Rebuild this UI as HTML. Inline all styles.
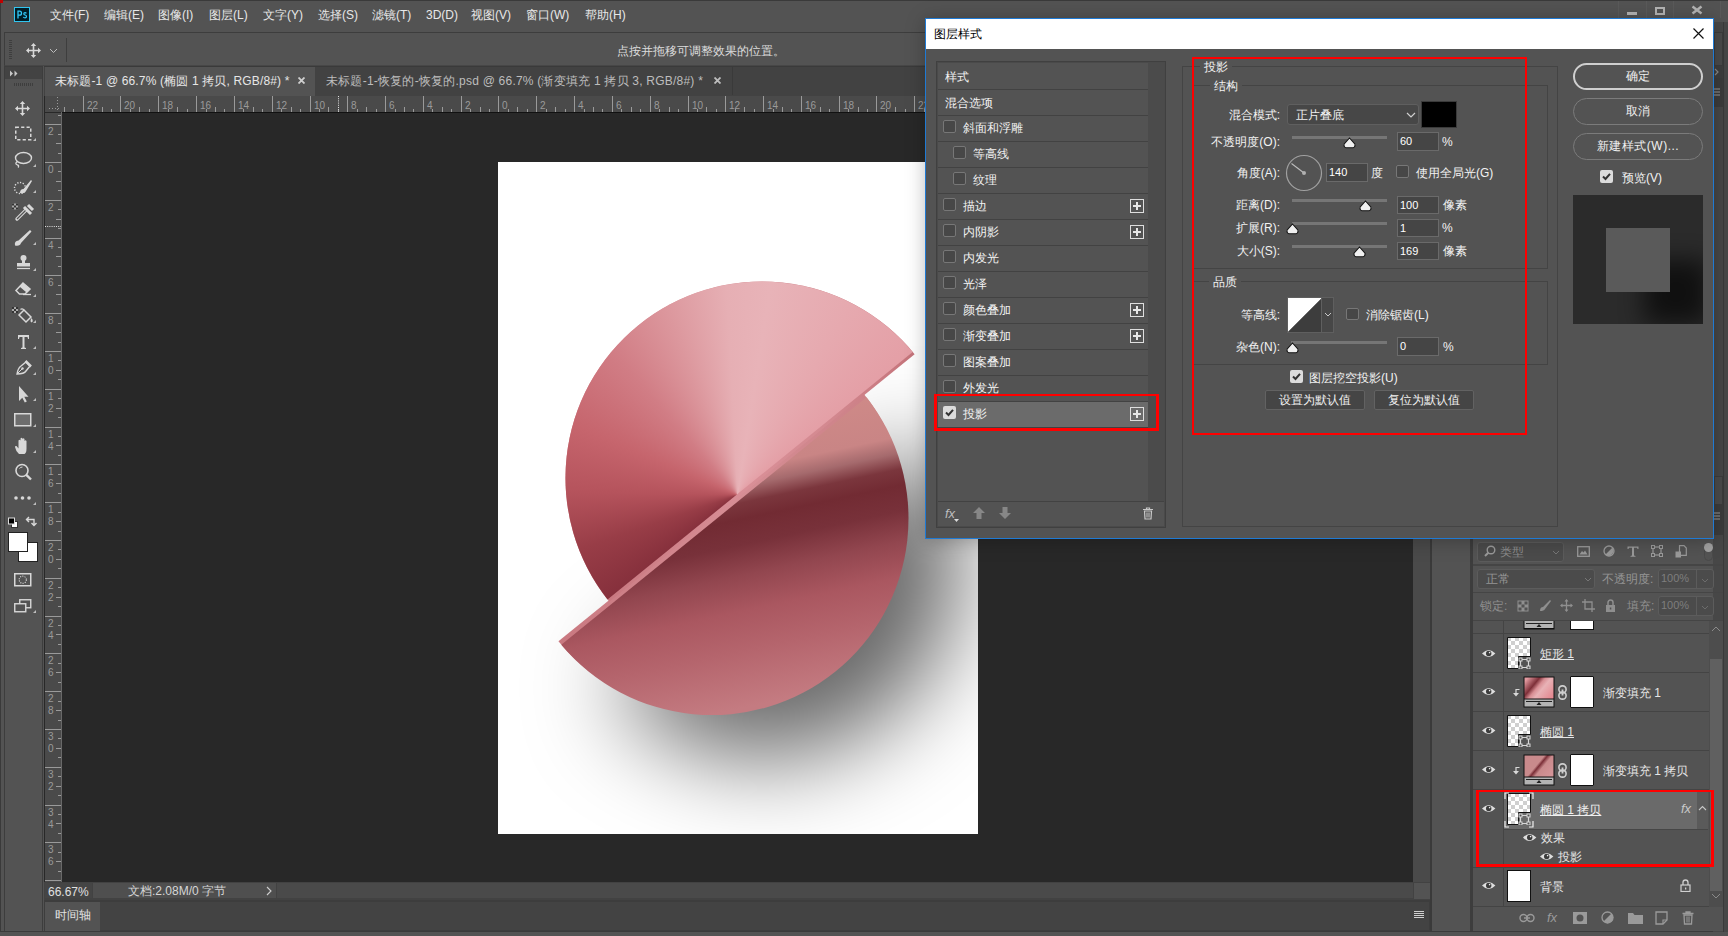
<!DOCTYPE html>
<html><head><meta charset="utf-8"><style>
html,body{margin:0;padding:0;width:1728px;height:936px;overflow:hidden;background:#535353}
body>div,body>svg{position:absolute}
.t{font-family:"Liberation Sans",sans-serif;white-space:nowrap}
</style></head><body>
<div style="left:0px;top:0px;width:1728px;height:936px;background:#535353"></div>
<div style="left:0px;top:0px;width:1728px;height:1px;background:#3a3a3a"></div>
<div style="left:0px;top:0px;width:1px;height:936px;background:#3a3a3a"></div>
<div style="left:14px;top:7px;width:16px;height:15px;background:#001d26;border:1px solid #31c5f0;box-sizing:border-box"></div>
<svg style="left:14px;top:7px;" width="16" height="15" viewBox="0 0 16 15"><path d="M4 11.5 V4.2 H5.6 Q7.5 4.2 7.5 6.2 Q7.5 8.2 5.6 8.2 H4" fill="none" stroke="#31c8f8" stroke-width="1.3"/><path d="M12.4 6.3 Q11.9 5.6 11 5.6 Q9.8 5.6 9.8 6.7 Q9.8 7.6 11.1 8 Q12.5 8.4 12.5 9.5 Q12.5 10.8 11 10.8 Q9.8 10.8 9.3 10" fill="none" stroke="#31c8f8" stroke-width="1.2"/></svg>
<div style="left:0px;top:0px;width:3px;height:3px;background:#c00000"></div>
<div class="t" style="left:50px;top:9px;font-size:12px;line-height:12px;color:#e8e8e8;">文件(F)</div>
<div class="t" style="left:104px;top:9px;font-size:12px;line-height:12px;color:#e8e8e8;">编辑(E)</div>
<div class="t" style="left:158px;top:9px;font-size:12px;line-height:12px;color:#e8e8e8;">图像(I)</div>
<div class="t" style="left:209px;top:9px;font-size:12px;line-height:12px;color:#e8e8e8;">图层(L)</div>
<div class="t" style="left:263px;top:9px;font-size:12px;line-height:12px;color:#e8e8e8;">文字(Y)</div>
<div class="t" style="left:318px;top:9px;font-size:12px;line-height:12px;color:#e8e8e8;">选择(S)</div>
<div class="t" style="left:372px;top:9px;font-size:12px;line-height:12px;color:#e8e8e8;">滤镜(T)</div>
<div class="t" style="left:426px;top:9px;font-size:12px;line-height:12px;color:#e8e8e8;">3D(D)</div>
<div class="t" style="left:471px;top:9px;font-size:12px;line-height:12px;color:#e8e8e8;">视图(V)</div>
<div class="t" style="left:526px;top:9px;font-size:12px;line-height:12px;color:#e8e8e8;">窗口(W)</div>
<div class="t" style="left:585px;top:9px;font-size:12px;line-height:12px;color:#e8e8e8;">帮助(H)</div>
<div style="left:1618px;top:1px;width:1px;height:17px;background:#5a5a5a"></div>
<div style="left:1646px;top:1px;width:1px;height:17px;background:#5a5a5a"></div>
<div style="left:1673px;top:1px;width:1px;height:17px;background:#5a5a5a"></div>
<div style="left:1720px;top:1px;width:1px;height:17px;background:#5a5a5a"></div>
<div style="left:1627px;top:12px;width:10px;height:3px;background:#b4b4b4"></div>
<div style="left:1655px;top:7px;width:10px;height:8px;border:2px solid #b4b4b4;box-sizing:border-box"></div>
<svg style="left:1691px;top:5px;" width="12" height="10" viewBox="0 0 12 10"><path d="M1.5 1.5 L10.5 8.5 M10.5 1.5 L1.5 8.5" stroke="#b4b4b4" stroke-width="2.4"/></svg>
<div style="left:4px;top:32px;width:1724px;height:34px;background:#535353;border-top:1px solid #3d3d3d;border-left:1px solid #3d3d3d;border-bottom:1px solid #474747;box-sizing:border-box"></div>
<div style="left:9px;top:40px;width:3px;height:1px;background:#3e3e3e"></div>
<div style="left:9px;top:42px;width:3px;height:1px;background:#3e3e3e"></div>
<div style="left:9px;top:44px;width:3px;height:1px;background:#3e3e3e"></div>
<div style="left:9px;top:46px;width:3px;height:1px;background:#3e3e3e"></div>
<div style="left:9px;top:48px;width:3px;height:1px;background:#3e3e3e"></div>
<div style="left:9px;top:50px;width:3px;height:1px;background:#3e3e3e"></div>
<div style="left:9px;top:52px;width:3px;height:1px;background:#3e3e3e"></div>
<div style="left:9px;top:54px;width:3px;height:1px;background:#3e3e3e"></div>
<div style="left:9px;top:56px;width:3px;height:1px;background:#3e3e3e"></div>
<div style="left:9px;top:58px;width:3px;height:1px;background:#3e3e3e"></div>
<svg style="left:24px;top:40px;" width="20" height="20" viewBox="0 0 20 20"><path d="M9.5 5 V16 M4 10.5 H15" stroke="#d8d8d8" stroke-width="1.6"/><path d="M9.5 3 L6.8 6 H12.2Z M9.5 18 L6.8 15 H12.2Z M2 10.5 L5 7.8 V13.2Z M17 10.5 L14 7.8 V13.2Z" fill="#d8d8d8"/></svg>
<svg style="left:49px;top:48px;" width="9" height="6" viewBox="0 0 9 6"><path d="M1 1 L4.5 4.5 L8 1" stroke="#bdbdbd" fill="none" stroke-width="1"/></svg>
<div style="left:66px;top:38px;width:1px;height:24px;background:#3e3e3e"></div>
<div class="t" style="left:617px;top:45px;font-size:12px;line-height:12px;color:#dcdcdc;">点按并拖移可调整效果的位置。</div>
<div style="left:44px;top:66px;width:1684px;height:30px;background:#424242"></div>
<div style="left:44px;top:66px;width:1684px;height:1px;background:#3a3a3a"></div>
<div style="left:45px;top:67px;width:270px;height:29px;background:#535353"></div>
<div class="t" style="left:55px;top:75px;font-size:12px;line-height:12px;color:#e6e6e6;letter-spacing:0.15px">未标题-1 @ 66.7% (椭圆 1 拷贝, RGB/8#) *</div>
<svg style="left:298px;top:77px;" width="7" height="7" viewBox="0 0 7 7"><path d="M0.5 0.5 L6.5 6.5 M6.5 0.5 L0.5 6.5" stroke="#cfcfcf" stroke-width="1.8"/></svg>
<div style="left:316px;top:67px;width:416px;height:28px;background:#424242"></div>
<div style="left:732px;top:67px;width:1px;height:28px;background:#3a3a3a"></div>
<div class="t" style="left:326px;top:75px;font-size:12px;line-height:12px;color:#bdbdbd;letter-spacing:0.22px">未标题-1-恢复的-恢复的.psd @ 66.7% (渐变填充 1 拷贝 3, RGB/8#) *</div>
<svg style="left:714px;top:77px;" width="7" height="7" viewBox="0 0 7 7"><path d="M0.5 0.5 L6.5 6.5 M6.5 0.5 L0.5 6.5" stroke="#bdbdbd" stroke-width="1.8"/></svg>
<div style="left:4px;top:66px;width:39px;height:866px;background:#535353;border:1px solid #3d3d3d;box-sizing:border-box"></div>
<div style="left:5px;top:67px;width:37px;height:12px;background:#434343"></div>
<svg style="left:9px;top:70px;" width="10" height="7" viewBox="0 0 10 7"><path d="M1 0.5 L4 3.5 L1 6.5Z M5.5 0.5 L8.5 3.5 L5.5 6.5Z" fill="#c8c8c8"/></svg>
<div style="left:14px;top:83px;width:1px;height:3px;background:#3e3e3e"></div>
<div style="left:16px;top:83px;width:1px;height:3px;background:#3e3e3e"></div>
<div style="left:18px;top:83px;width:1px;height:3px;background:#3e3e3e"></div>
<div style="left:20px;top:83px;width:1px;height:3px;background:#3e3e3e"></div>
<div style="left:22px;top:83px;width:1px;height:3px;background:#3e3e3e"></div>
<div style="left:24px;top:83px;width:1px;height:3px;background:#3e3e3e"></div>
<div style="left:26px;top:83px;width:1px;height:3px;background:#3e3e3e"></div>
<div style="left:28px;top:83px;width:1px;height:3px;background:#3e3e3e"></div>
<div style="left:30px;top:83px;width:1px;height:3px;background:#3e3e3e"></div>
<div style="left:32px;top:83px;width:1px;height:3px;background:#3e3e3e"></div>
<div style="left:44px;top:96px;width:1386px;height:786px;background:#282828"></div>
<div style="left:45px;top:96px;width:1368px;height:16px;background:#4a4a4a"></div>
<svg style="left:62px;top:96px;" width="1351" height="16" viewBox="0 0 1351 16"><path d="M2.5 11 V16" stroke="#9a9a9a" stroke-width="1"/><path d="M11.5 13 V16" stroke="#9a9a9a" stroke-width="1"/><path d="M21.5 0 V16" stroke="#9a9a9a" stroke-width="1"/><path d="M30.5 13 V16" stroke="#9a9a9a" stroke-width="1"/><path d="M40.5 11 V16" stroke="#9a9a9a" stroke-width="1"/><path d="M49.5 13 V16" stroke="#9a9a9a" stroke-width="1"/><text x="25" y="13" font-size="10" fill="#9a9a9a" font-family="Liberation Sans">22</text><path d="M58.5 0 V16" stroke="#9a9a9a" stroke-width="1"/><path d="M68.5 13 V16" stroke="#9a9a9a" stroke-width="1"/><path d="M77.5 11 V16" stroke="#9a9a9a" stroke-width="1"/><path d="M87.5 13 V16" stroke="#9a9a9a" stroke-width="1"/><text x="62" y="13" font-size="10" fill="#9a9a9a" font-family="Liberation Sans">20</text><path d="M96.5 0 V16" stroke="#9a9a9a" stroke-width="1"/><path d="M106.5 13 V16" stroke="#9a9a9a" stroke-width="1"/><path d="M115.5 11 V16" stroke="#9a9a9a" stroke-width="1"/><path d="M125.5 13 V16" stroke="#9a9a9a" stroke-width="1"/><text x="100" y="13" font-size="10" fill="#9a9a9a" font-family="Liberation Sans">18</text><path d="M134.5 0 V16" stroke="#9a9a9a" stroke-width="1"/><path d="M144.5 13 V16" stroke="#9a9a9a" stroke-width="1"/><path d="M153.5 11 V16" stroke="#9a9a9a" stroke-width="1"/><path d="M162.5 13 V16" stroke="#9a9a9a" stroke-width="1"/><text x="138" y="13" font-size="10" fill="#9a9a9a" font-family="Liberation Sans">16</text><path d="M172.5 0 V16" stroke="#9a9a9a" stroke-width="1"/><path d="M181.5 13 V16" stroke="#9a9a9a" stroke-width="1"/><path d="M191.5 11 V16" stroke="#9a9a9a" stroke-width="1"/><path d="M200.5 13 V16" stroke="#9a9a9a" stroke-width="1"/><text x="176" y="13" font-size="10" fill="#9a9a9a" font-family="Liberation Sans">14</text><path d="M210.5 0 V16" stroke="#9a9a9a" stroke-width="1"/><path d="M219.5 13 V16" stroke="#9a9a9a" stroke-width="1"/><path d="M229.5 11 V16" stroke="#9a9a9a" stroke-width="1"/><path d="M238.5 13 V16" stroke="#9a9a9a" stroke-width="1"/><text x="214" y="13" font-size="10" fill="#9a9a9a" font-family="Liberation Sans">12</text><path d="M248.5 0 V16" stroke="#9a9a9a" stroke-width="1"/><path d="M257.5 13 V16" stroke="#9a9a9a" stroke-width="1"/><path d="M266.5 11 V16" stroke="#9a9a9a" stroke-width="1"/><path d="M276.5 13 V16" stroke="#9a9a9a" stroke-width="1"/><text x="252" y="13" font-size="10" fill="#9a9a9a" font-family="Liberation Sans">10</text><path d="M285.5 0 V16" stroke="#9a9a9a" stroke-width="1"/><path d="M295.5 13 V16" stroke="#9a9a9a" stroke-width="1"/><path d="M304.5 11 V16" stroke="#9a9a9a" stroke-width="1"/><path d="M314.5 13 V16" stroke="#9a9a9a" stroke-width="1"/><text x="289" y="13" font-size="10" fill="#9a9a9a" font-family="Liberation Sans">8</text><path d="M323.5 0 V16" stroke="#9a9a9a" stroke-width="1"/><path d="M333.5 13 V16" stroke="#9a9a9a" stroke-width="1"/><path d="M342.5 11 V16" stroke="#9a9a9a" stroke-width="1"/><path d="M351.5 13 V16" stroke="#9a9a9a" stroke-width="1"/><text x="327" y="13" font-size="10" fill="#9a9a9a" font-family="Liberation Sans">6</text><path d="M361.5 0 V16" stroke="#9a9a9a" stroke-width="1"/><path d="M370.5 13 V16" stroke="#9a9a9a" stroke-width="1"/><path d="M380.5 11 V16" stroke="#9a9a9a" stroke-width="1"/><path d="M389.5 13 V16" stroke="#9a9a9a" stroke-width="1"/><text x="365" y="13" font-size="10" fill="#9a9a9a" font-family="Liberation Sans">4</text><path d="M399.5 0 V16" stroke="#9a9a9a" stroke-width="1"/><path d="M408.5 13 V16" stroke="#9a9a9a" stroke-width="1"/><path d="M418.5 11 V16" stroke="#9a9a9a" stroke-width="1"/><path d="M427.5 13 V16" stroke="#9a9a9a" stroke-width="1"/><text x="403" y="13" font-size="10" fill="#9a9a9a" font-family="Liberation Sans">2</text><path d="M436.5 0 V16" stroke="#9a9a9a" stroke-width="1"/><path d="M446.5 13 V16" stroke="#9a9a9a" stroke-width="1"/><path d="M455.5 11 V16" stroke="#9a9a9a" stroke-width="1"/><path d="M465.5 13 V16" stroke="#9a9a9a" stroke-width="1"/><text x="440" y="13" font-size="10" fill="#9a9a9a" font-family="Liberation Sans">0</text><path d="M474.5 0 V16" stroke="#9a9a9a" stroke-width="1"/><path d="M484.5 13 V16" stroke="#9a9a9a" stroke-width="1"/><path d="M493.5 11 V16" stroke="#9a9a9a" stroke-width="1"/><path d="M503.5 13 V16" stroke="#9a9a9a" stroke-width="1"/><text x="478" y="13" font-size="10" fill="#9a9a9a" font-family="Liberation Sans">2</text><path d="M512.5 0 V16" stroke="#9a9a9a" stroke-width="1"/><path d="M522.5 13 V16" stroke="#9a9a9a" stroke-width="1"/><path d="M531.5 11 V16" stroke="#9a9a9a" stroke-width="1"/><path d="M540.5 13 V16" stroke="#9a9a9a" stroke-width="1"/><text x="516" y="13" font-size="10" fill="#9a9a9a" font-family="Liberation Sans">4</text><path d="M550.5 0 V16" stroke="#9a9a9a" stroke-width="1"/><path d="M559.5 13 V16" stroke="#9a9a9a" stroke-width="1"/><path d="M569.5 11 V16" stroke="#9a9a9a" stroke-width="1"/><path d="M578.5 13 V16" stroke="#9a9a9a" stroke-width="1"/><text x="554" y="13" font-size="10" fill="#9a9a9a" font-family="Liberation Sans">6</text><path d="M588.5 0 V16" stroke="#9a9a9a" stroke-width="1"/><path d="M597.5 13 V16" stroke="#9a9a9a" stroke-width="1"/><path d="M607.5 11 V16" stroke="#9a9a9a" stroke-width="1"/><path d="M616.5 13 V16" stroke="#9a9a9a" stroke-width="1"/><text x="592" y="13" font-size="10" fill="#9a9a9a" font-family="Liberation Sans">8</text><path d="M626.5 0 V16" stroke="#9a9a9a" stroke-width="1"/><path d="M635.5 13 V16" stroke="#9a9a9a" stroke-width="1"/><path d="M644.5 11 V16" stroke="#9a9a9a" stroke-width="1"/><path d="M654.5 13 V16" stroke="#9a9a9a" stroke-width="1"/><text x="630" y="13" font-size="10" fill="#9a9a9a" font-family="Liberation Sans">10</text><path d="M663.5 0 V16" stroke="#9a9a9a" stroke-width="1"/><path d="M673.5 13 V16" stroke="#9a9a9a" stroke-width="1"/><path d="M682.5 11 V16" stroke="#9a9a9a" stroke-width="1"/><path d="M692.5 13 V16" stroke="#9a9a9a" stroke-width="1"/><text x="667" y="13" font-size="10" fill="#9a9a9a" font-family="Liberation Sans">12</text><path d="M701.5 0 V16" stroke="#9a9a9a" stroke-width="1"/><path d="M711.5 13 V16" stroke="#9a9a9a" stroke-width="1"/><path d="M720.5 11 V16" stroke="#9a9a9a" stroke-width="1"/><path d="M729.5 13 V16" stroke="#9a9a9a" stroke-width="1"/><text x="705" y="13" font-size="10" fill="#9a9a9a" font-family="Liberation Sans">14</text><path d="M739.5 0 V16" stroke="#9a9a9a" stroke-width="1"/><path d="M748.5 13 V16" stroke="#9a9a9a" stroke-width="1"/><path d="M758.5 11 V16" stroke="#9a9a9a" stroke-width="1"/><path d="M767.5 13 V16" stroke="#9a9a9a" stroke-width="1"/><text x="743" y="13" font-size="10" fill="#9a9a9a" font-family="Liberation Sans">16</text><path d="M777.5 0 V16" stroke="#9a9a9a" stroke-width="1"/><path d="M786.5 13 V16" stroke="#9a9a9a" stroke-width="1"/><path d="M796.5 11 V16" stroke="#9a9a9a" stroke-width="1"/><path d="M805.5 13 V16" stroke="#9a9a9a" stroke-width="1"/><text x="781" y="13" font-size="10" fill="#9a9a9a" font-family="Liberation Sans">18</text><path d="M814.5 0 V16" stroke="#9a9a9a" stroke-width="1"/><path d="M824.5 13 V16" stroke="#9a9a9a" stroke-width="1"/><path d="M833.5 11 V16" stroke="#9a9a9a" stroke-width="1"/><path d="M843.5 13 V16" stroke="#9a9a9a" stroke-width="1"/><text x="818" y="13" font-size="10" fill="#9a9a9a" font-family="Liberation Sans">20</text><path d="M852.5 0 V16" stroke="#9a9a9a" stroke-width="1"/><path d="M862.5 13 V16" stroke="#9a9a9a" stroke-width="1"/><path d="M871.5 11 V16" stroke="#9a9a9a" stroke-width="1"/><path d="M881.5 13 V16" stroke="#9a9a9a" stroke-width="1"/><text x="856" y="13" font-size="10" fill="#9a9a9a" font-family="Liberation Sans">22</text><path d="M890.5 0 V16" stroke="#9a9a9a" stroke-width="1"/><path d="M900.5 13 V16" stroke="#9a9a9a" stroke-width="1"/><path d="M909.5 11 V16" stroke="#9a9a9a" stroke-width="1"/><path d="M918.5 13 V16" stroke="#9a9a9a" stroke-width="1"/><text x="894" y="13" font-size="10" fill="#9a9a9a" font-family="Liberation Sans">24</text><path d="M928.5 0 V16" stroke="#9a9a9a" stroke-width="1"/><path d="M937.5 13 V16" stroke="#9a9a9a" stroke-width="1"/><path d="M947.5 11 V16" stroke="#9a9a9a" stroke-width="1"/><path d="M956.5 13 V16" stroke="#9a9a9a" stroke-width="1"/><text x="932" y="13" font-size="10" fill="#9a9a9a" font-family="Liberation Sans">26</text><path d="M966.5 0 V16" stroke="#9a9a9a" stroke-width="1"/><path d="M975.5 13 V16" stroke="#9a9a9a" stroke-width="1"/><path d="M985.5 11 V16" stroke="#9a9a9a" stroke-width="1"/><path d="M994.5 13 V16" stroke="#9a9a9a" stroke-width="1"/><text x="970" y="13" font-size="10" fill="#9a9a9a" font-family="Liberation Sans">28</text><path d="M1004.5 0 V16" stroke="#9a9a9a" stroke-width="1"/><path d="M1013.5 13 V16" stroke="#9a9a9a" stroke-width="1"/><path d="M1022.5 11 V16" stroke="#9a9a9a" stroke-width="1"/><path d="M1032.5 13 V16" stroke="#9a9a9a" stroke-width="1"/><text x="1008" y="13" font-size="10" fill="#9a9a9a" font-family="Liberation Sans">30</text><path d="M1041.5 0 V16" stroke="#9a9a9a" stroke-width="1"/><path d="M1051.5 13 V16" stroke="#9a9a9a" stroke-width="1"/><path d="M1060.5 11 V16" stroke="#9a9a9a" stroke-width="1"/><path d="M1070.5 13 V16" stroke="#9a9a9a" stroke-width="1"/><text x="1045" y="13" font-size="10" fill="#9a9a9a" font-family="Liberation Sans">32</text><path d="M1079.5 0 V16" stroke="#9a9a9a" stroke-width="1"/><path d="M1089.5 13 V16" stroke="#9a9a9a" stroke-width="1"/><path d="M1098.5 11 V16" stroke="#9a9a9a" stroke-width="1"/><path d="M1107.5 13 V16" stroke="#9a9a9a" stroke-width="1"/><text x="1083" y="13" font-size="10" fill="#9a9a9a" font-family="Liberation Sans">34</text><path d="M1117.5 0 V16" stroke="#9a9a9a" stroke-width="1"/><path d="M1126.5 13 V16" stroke="#9a9a9a" stroke-width="1"/><path d="M1136.5 11 V16" stroke="#9a9a9a" stroke-width="1"/><path d="M1145.5 13 V16" stroke="#9a9a9a" stroke-width="1"/><text x="1121" y="13" font-size="10" fill="#9a9a9a" font-family="Liberation Sans">36</text><path d="M1155.5 0 V16" stroke="#9a9a9a" stroke-width="1"/><path d="M1164.5 13 V16" stroke="#9a9a9a" stroke-width="1"/><path d="M1174.5 11 V16" stroke="#9a9a9a" stroke-width="1"/><path d="M1183.5 13 V16" stroke="#9a9a9a" stroke-width="1"/><text x="1159" y="13" font-size="10" fill="#9a9a9a" font-family="Liberation Sans">38</text><path d="M1192.5 0 V16" stroke="#9a9a9a" stroke-width="1"/><path d="M1202.5 13 V16" stroke="#9a9a9a" stroke-width="1"/><path d="M1211.5 11 V16" stroke="#9a9a9a" stroke-width="1"/><path d="M1221.5 13 V16" stroke="#9a9a9a" stroke-width="1"/><text x="1196" y="13" font-size="10" fill="#9a9a9a" font-family="Liberation Sans">40</text><path d="M1230.5 0 V16" stroke="#9a9a9a" stroke-width="1"/><path d="M1240.5 13 V16" stroke="#9a9a9a" stroke-width="1"/><path d="M1249.5 11 V16" stroke="#9a9a9a" stroke-width="1"/><path d="M1259.5 13 V16" stroke="#9a9a9a" stroke-width="1"/><text x="1234" y="13" font-size="10" fill="#9a9a9a" font-family="Liberation Sans">42</text><path d="M1268.5 0 V16" stroke="#9a9a9a" stroke-width="1"/><path d="M1278.5 13 V16" stroke="#9a9a9a" stroke-width="1"/><path d="M1287.5 11 V16" stroke="#9a9a9a" stroke-width="1"/><path d="M1296.5 13 V16" stroke="#9a9a9a" stroke-width="1"/><text x="1272" y="13" font-size="10" fill="#9a9a9a" font-family="Liberation Sans">44</text><path d="M1306.5 0 V16" stroke="#9a9a9a" stroke-width="1"/><path d="M1315.5 13 V16" stroke="#9a9a9a" stroke-width="1"/><path d="M1325.5 11 V16" stroke="#9a9a9a" stroke-width="1"/><path d="M1334.5 13 V16" stroke="#9a9a9a" stroke-width="1"/><text x="1310" y="13" font-size="10" fill="#9a9a9a" font-family="Liberation Sans">46</text><path d="M1344.5 0 V16" stroke="#9a9a9a" stroke-width="1"/><text x="1348" y="13" font-size="10" fill="#9a9a9a" font-family="Liberation Sans">48</text></svg>
<div style="left:62px;top:112px;width:1351px;height:1px;background:#111"></div>
<svg style="left:45px;top:96px;" width="17" height="16" viewBox="0 0 17 16"><path d="M4 12.5 H16 M12.5 1 V16" stroke="#9a9a9a" stroke-dasharray="1 2"/></svg>
<div style="left:45px;top:113px;width:16px;height:769px;background:#4a4a4a"></div>
<div style="left:61px;top:112px;width:1px;height:770px;background:#686868"></div>
<svg style="left:45px;top:113px;" width="16" height="769" viewBox="0 0 16 769"><path d="M13 2.5 H16" stroke="#9a9a9a" stroke-width="1"/><path d="M0 11.5 H16" stroke="#9a9a9a" stroke-width="1"/><path d="M13 21.5 H16" stroke="#9a9a9a" stroke-width="1"/><path d="M11 30.5 H16" stroke="#9a9a9a" stroke-width="1"/><path d="M13 40.5 H16" stroke="#9a9a9a" stroke-width="1"/><text x="3" y="22" font-size="10" fill="#9a9a9a" font-family="Liberation Sans">2</text><path d="M0 49.5 H16" stroke="#9a9a9a" stroke-width="1"/><path d="M13 58.5 H16" stroke="#9a9a9a" stroke-width="1"/><path d="M11 68.5 H16" stroke="#9a9a9a" stroke-width="1"/><path d="M13 77.5 H16" stroke="#9a9a9a" stroke-width="1"/><text x="3" y="60" font-size="10" fill="#9a9a9a" font-family="Liberation Sans">0</text><path d="M0 87.5 H16" stroke="#9a9a9a" stroke-width="1"/><path d="M13 96.5 H16" stroke="#9a9a9a" stroke-width="1"/><path d="M11 106.5 H16" stroke="#9a9a9a" stroke-width="1"/><path d="M13 115.5 H16" stroke="#9a9a9a" stroke-width="1"/><text x="3" y="98" font-size="10" fill="#9a9a9a" font-family="Liberation Sans">2</text><path d="M0 125.5 H16" stroke="#9a9a9a" stroke-width="1"/><path d="M13 134.5 H16" stroke="#9a9a9a" stroke-width="1"/><path d="M11 143.5 H16" stroke="#9a9a9a" stroke-width="1"/><path d="M13 153.5 H16" stroke="#9a9a9a" stroke-width="1"/><text x="3" y="136" font-size="10" fill="#9a9a9a" font-family="Liberation Sans">4</text><path d="M0 162.5 H16" stroke="#9a9a9a" stroke-width="1"/><path d="M13 172.5 H16" stroke="#9a9a9a" stroke-width="1"/><path d="M11 181.5 H16" stroke="#9a9a9a" stroke-width="1"/><path d="M13 191.5 H16" stroke="#9a9a9a" stroke-width="1"/><text x="3" y="173" font-size="10" fill="#9a9a9a" font-family="Liberation Sans">6</text><path d="M0 200.5 H16" stroke="#9a9a9a" stroke-width="1"/><path d="M13 210.5 H16" stroke="#9a9a9a" stroke-width="1"/><path d="M11 219.5 H16" stroke="#9a9a9a" stroke-width="1"/><path d="M13 229.5 H16" stroke="#9a9a9a" stroke-width="1"/><text x="3" y="211" font-size="10" fill="#9a9a9a" font-family="Liberation Sans">8</text><path d="M0 238.5 H16" stroke="#9a9a9a" stroke-width="1"/><path d="M13 247.5 H16" stroke="#9a9a9a" stroke-width="1"/><path d="M11 257.5 H16" stroke="#9a9a9a" stroke-width="1"/><path d="M13 266.5 H16" stroke="#9a9a9a" stroke-width="1"/><text x="3" y="249" font-size="10" fill="#9a9a9a" font-family="Liberation Sans">1</text><text x="3" y="261" font-size="10" fill="#9a9a9a" font-family="Liberation Sans">0</text><path d="M0 276.5 H16" stroke="#9a9a9a" stroke-width="1"/><path d="M13 285.5 H16" stroke="#9a9a9a" stroke-width="1"/><path d="M11 295.5 H16" stroke="#9a9a9a" stroke-width="1"/><path d="M13 304.5 H16" stroke="#9a9a9a" stroke-width="1"/><text x="3" y="287" font-size="10" fill="#9a9a9a" font-family="Liberation Sans">1</text><text x="3" y="299" font-size="10" fill="#9a9a9a" font-family="Liberation Sans">2</text><path d="M0 314.5 H16" stroke="#9a9a9a" stroke-width="1"/><path d="M13 323.5 H16" stroke="#9a9a9a" stroke-width="1"/><path d="M11 332.5 H16" stroke="#9a9a9a" stroke-width="1"/><path d="M13 342.5 H16" stroke="#9a9a9a" stroke-width="1"/><text x="3" y="325" font-size="10" fill="#9a9a9a" font-family="Liberation Sans">1</text><text x="3" y="337" font-size="10" fill="#9a9a9a" font-family="Liberation Sans">4</text><path d="M0 351.5 H16" stroke="#9a9a9a" stroke-width="1"/><path d="M13 361.5 H16" stroke="#9a9a9a" stroke-width="1"/><path d="M11 370.5 H16" stroke="#9a9a9a" stroke-width="1"/><path d="M13 380.5 H16" stroke="#9a9a9a" stroke-width="1"/><text x="3" y="362" font-size="10" fill="#9a9a9a" font-family="Liberation Sans">1</text><text x="3" y="374" font-size="10" fill="#9a9a9a" font-family="Liberation Sans">6</text><path d="M0 389.5 H16" stroke="#9a9a9a" stroke-width="1"/><path d="M13 399.5 H16" stroke="#9a9a9a" stroke-width="1"/><path d="M11 408.5 H16" stroke="#9a9a9a" stroke-width="1"/><path d="M13 418.5 H16" stroke="#9a9a9a" stroke-width="1"/><text x="3" y="400" font-size="10" fill="#9a9a9a" font-family="Liberation Sans">1</text><text x="3" y="412" font-size="10" fill="#9a9a9a" font-family="Liberation Sans">8</text><path d="M0 427.5 H16" stroke="#9a9a9a" stroke-width="1"/><path d="M13 436.5 H16" stroke="#9a9a9a" stroke-width="1"/><path d="M11 446.5 H16" stroke="#9a9a9a" stroke-width="1"/><path d="M13 455.5 H16" stroke="#9a9a9a" stroke-width="1"/><text x="3" y="438" font-size="10" fill="#9a9a9a" font-family="Liberation Sans">2</text><text x="3" y="450" font-size="10" fill="#9a9a9a" font-family="Liberation Sans">0</text><path d="M0 465.5 H16" stroke="#9a9a9a" stroke-width="1"/><path d="M13 474.5 H16" stroke="#9a9a9a" stroke-width="1"/><path d="M11 484.5 H16" stroke="#9a9a9a" stroke-width="1"/><path d="M13 493.5 H16" stroke="#9a9a9a" stroke-width="1"/><text x="3" y="476" font-size="10" fill="#9a9a9a" font-family="Liberation Sans">2</text><text x="3" y="488" font-size="10" fill="#9a9a9a" font-family="Liberation Sans">2</text><path d="M0 503.5 H16" stroke="#9a9a9a" stroke-width="1"/><path d="M13 512.5 H16" stroke="#9a9a9a" stroke-width="1"/><path d="M11 521.5 H16" stroke="#9a9a9a" stroke-width="1"/><path d="M13 531.5 H16" stroke="#9a9a9a" stroke-width="1"/><text x="3" y="514" font-size="10" fill="#9a9a9a" font-family="Liberation Sans">2</text><text x="3" y="526" font-size="10" fill="#9a9a9a" font-family="Liberation Sans">4</text><path d="M0 540.5 H16" stroke="#9a9a9a" stroke-width="1"/><path d="M13 550.5 H16" stroke="#9a9a9a" stroke-width="1"/><path d="M11 559.5 H16" stroke="#9a9a9a" stroke-width="1"/><path d="M13 569.5 H16" stroke="#9a9a9a" stroke-width="1"/><text x="3" y="551" font-size="10" fill="#9a9a9a" font-family="Liberation Sans">2</text><text x="3" y="563" font-size="10" fill="#9a9a9a" font-family="Liberation Sans">6</text><path d="M0 578.5 H16" stroke="#9a9a9a" stroke-width="1"/><path d="M13 588.5 H16" stroke="#9a9a9a" stroke-width="1"/><path d="M11 597.5 H16" stroke="#9a9a9a" stroke-width="1"/><path d="M13 607.5 H16" stroke="#9a9a9a" stroke-width="1"/><text x="3" y="589" font-size="10" fill="#9a9a9a" font-family="Liberation Sans">2</text><text x="3" y="601" font-size="10" fill="#9a9a9a" font-family="Liberation Sans">8</text><path d="M0 616.5 H16" stroke="#9a9a9a" stroke-width="1"/><path d="M13 625.5 H16" stroke="#9a9a9a" stroke-width="1"/><path d="M11 635.5 H16" stroke="#9a9a9a" stroke-width="1"/><path d="M13 644.5 H16" stroke="#9a9a9a" stroke-width="1"/><text x="3" y="627" font-size="10" fill="#9a9a9a" font-family="Liberation Sans">3</text><text x="3" y="639" font-size="10" fill="#9a9a9a" font-family="Liberation Sans">0</text><path d="M0 654.5 H16" stroke="#9a9a9a" stroke-width="1"/><path d="M13 663.5 H16" stroke="#9a9a9a" stroke-width="1"/><path d="M11 673.5 H16" stroke="#9a9a9a" stroke-width="1"/><path d="M13 682.5 H16" stroke="#9a9a9a" stroke-width="1"/><text x="3" y="665" font-size="10" fill="#9a9a9a" font-family="Liberation Sans">3</text><text x="3" y="677" font-size="10" fill="#9a9a9a" font-family="Liberation Sans">2</text><path d="M0 692.5 H16" stroke="#9a9a9a" stroke-width="1"/><path d="M13 701.5 H16" stroke="#9a9a9a" stroke-width="1"/><path d="M11 710.5 H16" stroke="#9a9a9a" stroke-width="1"/><path d="M13 720.5 H16" stroke="#9a9a9a" stroke-width="1"/><text x="3" y="703" font-size="10" fill="#9a9a9a" font-family="Liberation Sans">3</text><text x="3" y="715" font-size="10" fill="#9a9a9a" font-family="Liberation Sans">4</text><path d="M0 729.5 H16" stroke="#9a9a9a" stroke-width="1"/><path d="M13 739.5 H16" stroke="#9a9a9a" stroke-width="1"/><path d="M11 748.5 H16" stroke="#9a9a9a" stroke-width="1"/><path d="M13 758.5 H16" stroke="#9a9a9a" stroke-width="1"/><text x="3" y="740" font-size="10" fill="#9a9a9a" font-family="Liberation Sans">3</text><text x="3" y="752" font-size="10" fill="#9a9a9a" font-family="Liberation Sans">6</text><path d="M0 767.5 H16" stroke="#9a9a9a" stroke-width="1"/><text x="3" y="778" font-size="10" fill="#9a9a9a" font-family="Liberation Sans">3</text><text x="3" y="790" font-size="10" fill="#9a9a9a" font-family="Liberation Sans">8</text></svg>
<svg style="left:338px;top:96px;" width="2" height="16" viewBox="0 0 2 16"><path d="M0.5 0 V16" stroke="#e0e0e0" stroke-dasharray="1 1.2"/></svg>
<svg style="left:45px;top:226px;" width="16" height="2" viewBox="0 0 16 2"><path d="M0 0.5 H16" stroke="#e0e0e0" stroke-dasharray="1 1.2"/></svg>
<div style="left:62px;top:113px;width:1351px;height:769px;background:#282828"></div>
<div style="left:1413px;top:96px;width:17px;height:786px;background:#4a4a4a"></div>
<svg style="left:10px;top:98px;" width="28" height="20" viewBox="0 0 28 20"><path d="M12.5 5 V16 M7 10.5 H18" stroke="#d8d8d8" stroke-width="1.6"/><path d="M12.5 3 L9.8 6 H15.2Z M12.5 18 L9.8 15 H15.2Z M5 10.5 L8 7.8 V13.2Z M20 10.5 L17 7.8 V13.2Z" fill="#d8d8d8"/></svg>
<svg style="left:10px;top:124px;" width="28" height="20" viewBox="0 0 28 20"><rect x="5.75" y="3.25" width="15" height="12.5" fill="none" stroke="#d8d8d8" stroke-width="1.5" stroke-dasharray="3.2 2.2"/><path d="M23 17 H26 V14Z" fill="#bdbdbd"/></svg>
<svg style="left:10px;top:150px;" width="28" height="20" viewBox="0 0 28 20"><ellipse cx="13.5" cy="8" rx="8" ry="5.5" fill="none" stroke="#d8d8d8" stroke-width="1.4"/><path d="M7 11.5 Q4.5 14 7.5 15 Q9.5 15.5 8 17.5" fill="none" stroke="#d8d8d8" stroke-width="1.3"/><path d="M23 17 H26 V14Z" fill="#bdbdbd"/></svg>
<svg style="left:10px;top:176px;" width="28" height="20" viewBox="0 0 28 20"><circle cx="10" cy="12" r="5.5" fill="none" stroke="#d8d8d8" stroke-width="1.4" stroke-dasharray="1.3 1.5"/><path d="M10 17 Q10 13 13.5 13 L21 4 L22 5 L16 15 Q15 18 10 17Z" fill="#d8d8d8"/><path d="M23 17 H26 V14Z" fill="#bdbdbd"/></svg>
<svg style="left:10px;top:202px;" width="28" height="20" viewBox="0 0 28 20"><path d="M7 17 L16 8" stroke="#d8d8d8" stroke-width="3.4" stroke-linecap="round"/><path d="M7 17 L16 8" stroke="#535353" stroke-width="1.2"/><path d="M14 5 L21 12 M18 3 L23 8" stroke="#d8d8d8" stroke-width="3"/><rect x="2" y="1.5" width="6" height="6" fill="#aaa"/><path d="M2 1.5 h2v2h-2z M6 1.5 h2v2h-2z M4 3.5 h2v2h-2z M2 5.5 h2v2h-2z M6 5.5 h2v2h-2z" fill="#333"/></svg>
<svg style="left:10px;top:228px;" width="28" height="20" viewBox="0 0 28 20"><path d="M5 17.5 Q4 13 8.5 12.5 L20 2 L21.5 3.5 L11 15 Q10 18.5 5 17.5Z" fill="#d8d8d8"/><path d="M23 17 H26 V14Z" fill="#bdbdbd"/></svg>
<svg style="left:10px;top:254px;" width="28" height="20" viewBox="0 0 28 20"><circle cx="13.5" cy="4" r="3" fill="#d8d8d8"/><path d="M12 6 H15 V9 H20 V12.5 H7 V9 H12Z" fill="#d8d8d8"/><path d="M7 14.5 H20" stroke="#d8d8d8" stroke-width="1.3"/><path d="M23 17 H26 V14Z" fill="#bdbdbd"/></svg>
<svg style="left:10px;top:280px;" width="28" height="20" viewBox="0 0 28 20"><path d="M13 3 L20 9 L15 14 H9.5 L6 10.5Z" fill="none" stroke="#d8d8d8" stroke-width="1.5"/><path d="M13 3 L20 9 L16.5 12.5 L9.5 6.5Z" fill="#d8d8d8"/><path d="M13 14.5 H21" stroke="#d8d8d8" stroke-width="1.3"/><path d="M23 17 H26 V14Z" fill="#bdbdbd"/></svg>
<svg style="left:10px;top:306px;" width="28" height="20" viewBox="0 0 28 20"><path d="M9 9 L14 4 L21 11 L16 16Z" fill="none" stroke="#d8d8d8" stroke-width="1.5"/><path d="M14 4 Q12 2 10.5 3.5" fill="none" stroke="#d8d8d8" stroke-width="1.2"/><path d="M21.5 12 Q24 15.5 21.5 16.5 Q19.5 15.5 21.5 12Z" fill="#d8d8d8"/><rect x="2" y="1" width="6" height="6" fill="#aaa"/><path d="M2 1 h2v2h-2z M6 1 h2v2h-2z M4 3 h2v2h-2z M2 5 h2v2h-2z M6 5 h2v2h-2z" fill="#333"/><path d="M23 17 H26 V14Z" fill="#bdbdbd"/></svg>
<svg style="left:10px;top:332px;" width="28" height="20" viewBox="0 0 28 20"><path d="M8 3 H19 V7 H18 L17.5 5 H14.5 V15.5 L16 16 V17 H11 V16 L12.5 15.5 V5 H9.5 L9 7 H8Z" fill="#d8d8d8"/><path d="M23 17 H26 V14Z" fill="#bdbdbd"/></svg>
<svg style="left:10px;top:358px;" width="28" height="20" viewBox="0 0 28 20"><path d="M7 16 Q8 10 11 8 L16 4 L20 8 L16 13 Q14 16 7 16Z" fill="none" stroke="#d8d8d8" stroke-width="1.4"/><path d="M15.5 3 L21 8.5" stroke="#d8d8d8" stroke-width="2.5"/><path d="M7 16 L12 11" stroke="#d8d8d8" stroke-width="1"/><circle cx="12.5" cy="10.5" r="1.2" fill="#d8d8d8"/><path d="M23 17 H26 V14Z" fill="#bdbdbd"/></svg>
<svg style="left:10px;top:384px;" width="28" height="20" viewBox="0 0 28 20"><path d="M9 2 V17 L12.3 13.7 L14.8 18.5 L16.8 17.5 L14.3 12.8 H18.5Z" fill="#d8d8d8"/><path d="M23 17 H26 V14Z" fill="#bdbdbd"/></svg>
<svg style="left:10px;top:410px;" width="28" height="20" viewBox="0 0 28 20"><rect x="4.75" y="3.75" width="16" height="12" fill="#6d6d6d" stroke="#d8d8d8" stroke-width="1.5"/><path d="M23 17 H26 V14Z" fill="#bdbdbd"/></svg>
<svg style="left:10px;top:436px;" width="28" height="20" viewBox="0 0 28 20"><path d="M9 18 Q5.5 14.5 5 11 Q5 9.5 6.5 10 L8.5 12.5 V4.5 Q9.5 3 10.5 4.5 V9.5 V2.5 Q11.5 1 12.5 2.5 V9.5 V3 Q13.5 1.5 14.5 3 V9.5 V5 Q15.5 3.5 16.5 5 V12.5 Q16.5 17 14.5 18Z" fill="#d8d8d8"/><path d="M23 17 H26 V14Z" fill="#bdbdbd"/></svg>
<svg style="left:10px;top:462px;" width="28" height="20" viewBox="0 0 28 20"><circle cx="12" cy="8.5" r="6" fill="none" stroke="#d8d8d8" stroke-width="1.6"/><path d="M16.3 12.8 L21 17.5" stroke="#d8d8d8" stroke-width="2.4"/><path d="M9.5 6.5 Q10.5 5 12.5 5" stroke="#d8d8d8" fill="none"/></svg>
<svg style="left:10px;top:488px;" width="28" height="20" viewBox="0 0 28 20"><circle cx="6" cy="10" r="1.8" fill="#d8d8d8"/><circle cx="12.5" cy="10" r="1.8" fill="#d8d8d8"/><circle cx="19" cy="10" r="1.8" fill="#d8d8d8"/><path d="M23 17 H26 V14Z" fill="#bdbdbd"/></svg>
<svg style="left:7px;top:514px;" width="32" height="50" viewBox="0 0 32 50"><rect x="4.5" y="7.5" width="6" height="6" fill="#fff" stroke="#333"/><rect x="1.5" y="4" width="6" height="6" fill="#000" stroke="#ddd"/><path d="M20 5.5 H27 V11 M22 3 L19.5 5.5 L22 8 M24.5 9 L27 11.5 L29.5 9" fill="none" stroke="#d8d8d8" stroke-width="1.4"/><rect x="11.5" y="28.5" width="19" height="19" fill="#fff" stroke="#222"/><rect x="1.5" y="18.5" width="19" height="19" fill="#fff" stroke="#222"/></svg>
<svg style="left:10px;top:570px;" width="28" height="20" viewBox="0 0 28 20"><rect x="4.75" y="3.75" width="16" height="12" fill="none" stroke="#d8d8d8" stroke-width="1.5"/><circle cx="12.75" cy="9.75" r="3.6" fill="none" stroke="#d8d8d8" stroke-width="1.1" stroke-dasharray="1.1 1.2"/></svg>
<svg style="left:10px;top:596px;" width="28" height="20" viewBox="0 0 28 20"><rect x="9.75" y="3.75" width="11" height="8" fill="none" stroke="#d8d8d8" stroke-width="1.4"/><rect x="4.75" y="7.75" width="11" height="8" fill="#535353" stroke="#d8d8d8" stroke-width="1.4"/><path d="M23 17 H26 V14Z" fill="#bdbdbd"/></svg>
<div style="left:44px;top:882px;width:1386px;height:18px;background:#424242"></div>
<div style="left:45px;top:883px;width:47px;height:15px;background:#454545"></div>
<div class="t" style="left:48px;top:886px;font-size:12px;line-height:12px;color:#e0e0e0;">66.67%</div>
<div style="left:93px;top:883px;width:183px;height:15px;background:#4f4f4f"></div>
<div class="t" style="left:128px;top:885px;font-size:12px;line-height:12px;color:#d6d6d6;">文档:2.08M/0 字节</div>
<svg style="left:266px;top:886px;" width="6" height="10" viewBox="0 0 6 10"><path d="M1 1 L5 5 L1 9" stroke="#cfcfcf" fill="none" stroke-width="1.1"/></svg>
<div style="left:277px;top:883px;width:1136px;height:15px;background:#4a4a4a"></div>
<div style="left:1414px;top:883px;width:16px;height:16px;background:#535353"></div>
<div style="left:44px;top:900px;width:1386px;height:32px;background:#3d3d3d"></div>
<div style="left:45px;top:902px;width:55px;height:29px;background:#535353"></div>
<div class="t" style="left:55px;top:909px;font-size:12px;line-height:12px;color:#e0e0e0;">时间轴</div>
<div style="left:100px;top:902px;width:1329px;height:28px;background:#434343"></div>
<svg style="left:1413px;top:910px;" width="11" height="10" viewBox="0 0 11 10"><path d="M1 1.5 H11 M1 3.5 H11 M1 5.5 H11 M1 7.5 H11" stroke="#d0d0d0" stroke-width="1"/></svg>
<div style="left:498px;top:162px;width:480px;height:672px;background:#fff;overflow:hidden"><svg width="480" height="672" style="position:absolute;left:0;top:0"><defs><filter id="sh" x="-80%" y="-80%" width="260%" height="260%"><feGaussianBlur stdDeviation="48"/></filter><linearGradient id="lg" x1="62.4" y1="293.4" x2="121.7" y2="572.1" gradientUnits="userSpaceOnUse"><stop offset="0.000" stop-color="#cf8a88"/><stop offset="0.182" stop-color="#c98585"/><stop offset="0.239" stop-color="#a56a6d"/><stop offset="0.295" stop-color="#7b363d"/><stop offset="0.351" stop-color="#722b33"/><stop offset="0.439" stop-color="#78313a"/><stop offset="0.544" stop-color="#92464f"/><stop offset="0.667" stop-color="#aa5760"/><stop offset="0.807" stop-color="#b5656d"/><stop offset="1.000" stop-color="#c47b81"/></linearGradient><linearGradient id="ub" x1="418" y1="192" x2="110" y2="440" gradientUnits="userSpaceOnUse"><stop offset="0" stop-color="#c4737a"/><stop offset="0.3" stop-color="#d48a91"/><stop offset="0.55" stop-color="#d98f97"/><stop offset="1" stop-color="#c97880"/></linearGradient><linearGradient id="lb" x1="418" y1="192" x2="60" y2="480" gradientUnits="userSpaceOnUse"><stop offset="0" stop-color="#c97c82"/><stop offset="0.5" stop-color="#d68e95"/><stop offset="1" stop-color="#c97880"/></linearGradient></defs><path d="M366.62 232.82 A196.5 196.5 0 0 1 61.38 480.38 Z" transform="translate(51 43)" fill="#000" fill-opacity="0.6" filter="url(#sh)"/><path d="M365.67 231.66 A196.5 196.5 0 0 1 60.44 479.21 Z" fill="url(#lb)"/><path d="M368.49 235.17 A196.5 196.5 0 0 1 63.29 482.69 Z" fill="url(#lg)"/><path d="M416.62 192.22 A196.5 196.5 0 0 0 111.38 439.78 Z" fill="url(#ub)"/></svg><div style="position:absolute;left:0;top:0;width:480px;height:672px;clip-path:path('M414.71 189.91 A196.5 196.5 0 0 0 109.51 437.43 Z');background:conic-gradient(from 231deg at 239.5px 333px, #86303c 0deg, #983d47 20deg, #b5535c 40deg, #c6656d 62deg, #d17d85 88deg, #dc979d 108deg, #e6afb4 126deg, #e8b3b8 138deg, #e6a9af 160deg, #e49fa6 180deg, #86303c 360deg)"></div></div>
<div style="left:1430px;top:96px;width:2px;height:836px;background:#3a3a3a"></div>
<div style="left:1432px;top:96px;width:38px;height:836px;background:#535353"></div>
<div style="left:1470px;top:96px;width:3px;height:836px;background:#3d3d3d"></div>
<div style="left:1473px;top:96px;width:250px;height:836px;background:#535353"></div>
<div style="left:1723px;top:22px;width:1px;height:910px;background:#3d3d3d"></div>
<div style="left:0px;top:931px;width:1728px;height:5px;background:#535353"></div>
<div style="left:0px;top:931px;width:1728px;height:1px;background:#3a3a3a"></div>
<div style="left:1713px;top:22px;width:15px;height:910px;background:#474747"></div>
<div style="left:1723px;top:22px;width:1px;height:910px;background:#3a3a3a"></div>
<div style="left:1714px;top:32px;width:9px;height:34px;background:#4b4b4b;border:1px solid #3c3c3c;box-sizing:border-box"></div>
<div style="left:1714px;top:66px;width:9px;height:12px;background:#3e3e3e"></div>
<svg style="left:1714px;top:68px;" width="6" height="8" viewBox="0 0 6 8"><path d="M1 1 L4 4 L1 7" stroke="#8a8a8a" fill="none" stroke-width="1.2"/></svg>
<div style="left:1714px;top:78px;width:9px;height:29px;background:#3c3c3c"></div>
<svg style="left:1714px;top:88px;" width="6" height="9" viewBox="0 0 6 9"><path d="M0 1 H6 M0 4 H6 M0 7 H6" stroke="#9a9a9a"/></svg>
<div style="left:1714px;top:476px;width:9px;height:29px;background:#4b4b4b;border:1px solid #3c3c3c;box-sizing:border-box"></div>
<div style="left:1714px;top:505px;width:9px;height:30px;background:#3c3c3c"></div>
<svg style="left:1714px;top:512px;" width="6" height="9" viewBox="0 0 6 9"><path d="M0 1 H6 M0 4 H6 M0 7 H6" stroke="#9a9a9a"/></svg>
<div style="left:1477px;top:542px;width:87px;height:20px;background:#4b4b4b;border:1px solid #5c5c5c;border-radius:3px;box-sizing:border-box"></div>
<svg style="left:1484px;top:545px;" width="12" height="12" viewBox="0 0 12 12"><circle cx="7" cy="5" r="3.8" fill="none" stroke="#9a9a9a" stroke-width="1.4"/><path d="M4.3 7.7 L1 11" stroke="#9a9a9a" stroke-width="2"/></svg>
<div class="t" style="left:1500px;top:546px;font-size:12px;line-height:12px;color:#8c8c8c;">类型</div>
<svg style="left:1552px;top:550px;" width="8" height="5" viewBox="0 0 8 5"><path d="M1 1 L4 4 L7 1" stroke="#777" fill="none"/></svg>
<svg style="left:1577px;top:546px;" width="13" height="11" viewBox="0 0 13 11"><rect x="0.7" y="0.7" width="11.6" height="9.6" fill="none" stroke="#9a9a9a" stroke-width="1.3"/><path d="M2.5 8.5 L5 5 L6.5 6.5 L8 4.5 L10.5 8.5Z" fill="#9a9a9a"/></svg>
<svg style="left:1603px;top:545px;" width="12" height="12" viewBox="0 0 12 12"><circle cx="6" cy="6" r="5" fill="none" stroke="#9a9a9a" stroke-width="1.3"/><path d="M9.5 2.5 A5 5 0 0 1 2.5 9.5Z" fill="#9a9a9a"/></svg>
<svg style="left:1627px;top:546px;" width="12" height="11" viewBox="0 0 12 11"><path d="M0.5 0.5 H11.5 V3 H10.5 L10 1.8 H7 V9.5 L8.5 10 V10.8 H3.5 V10 L5 9.5 V1.8 H2 L1.5 3 H0.5Z" fill="#9a9a9a"/></svg>
<svg style="left:1651px;top:545px;" width="12" height="12" viewBox="0 0 12 12"><rect x="2" y="2" width="8" height="8" fill="none" stroke="#9a9a9a" stroke-width="1.2"/><rect x="0.5" y="0.5" width="3" height="3" fill="#535353" stroke="#9a9a9a"/><rect x="8.5" y="0.5" width="3" height="3" fill="#535353" stroke="#9a9a9a"/><rect x="0.5" y="8.5" width="3" height="3" fill="#535353" stroke="#9a9a9a"/><rect x="8.5" y="8.5" width="3" height="3" fill="#535353" stroke="#9a9a9a"/></svg>
<svg style="left:1675px;top:545px;" width="12" height="13" viewBox="0 0 12 13"><path d="M4.5 0.7 H9 L11.3 3 V10.3 H4.5Z" fill="none" stroke="#9a9a9a" stroke-width="1.2"/><rect x="0.5" y="6.5" width="5.5" height="6" fill="#9a9a9a"/></svg>
<div style="left:1704px;top:543px;width:9px;height:18px;border:1px solid #4a4a4a;border-radius:5px;box-sizing:border-box"></div>
<div style="left:1704px;top:543px;width:9px;height:9px;background:#a0a0a0;border-radius:50%"></div>
<div style="left:1473px;top:564px;width:250px;height:2px;background:#454545"></div>
<div style="left:1477px;top:569px;width:118px;height:20px;background:#4b4b4b;border:1px solid #5c5c5c;border-radius:3px;box-sizing:border-box"></div>
<div class="t" style="left:1486px;top:573px;font-size:12px;line-height:12px;color:#959595;">正常</div>
<svg style="left:1584px;top:577px;" width="8" height="5" viewBox="0 0 8 5"><path d="M1 1 L4 4 L7 1" stroke="#777" fill="none"/></svg>
<div class="t" style="left:1602px;top:573px;font-size:12px;line-height:12px;color:#959595;">不透明度:</div>
<div style="left:1658px;top:569px;width:56px;height:20px;background:#4b4b4b;border:1px solid #5c5c5c;border-radius:3px;box-sizing:border-box"></div>
<div style="left:1696px;top:570px;width:1px;height:18px;background:#5c5c5c"></div>
<div class="t" style="left:1661px;top:573px;font-size:11px;line-height:11px;color:#7e7e7e;">100%</div>
<svg style="left:1701px;top:578px;" width="8" height="5" viewBox="0 0 8 5"><path d="M1 1 L4 4 L7 1" stroke="#6c6c6c" fill="none"/></svg>
<div style="left:1473px;top:592px;width:250px;height:1px;background:#454545"></div>
<div class="t" style="left:1480px;top:600px;font-size:12px;line-height:12px;color:#8f8f8f;">锁定:</div>
<svg style="left:1517px;top:600px;" width="12" height="12" viewBox="0 0 12 12"><rect x="0.5" y="0.5" width="11" height="11" fill="#8f8f8f"/><rect x="1.5" y="1.5" width="3" height="3" fill="#535353"/><rect x="7.5" y="1.5" width="3" height="3" fill="#535353"/><rect x="4.5" y="4.5" width="3" height="3" fill="#535353"/><rect x="1.5" y="7.5" width="3" height="3" fill="#535353"/><rect x="7.5" y="7.5" width="3" height="3" fill="#535353"/></svg>
<svg style="left:1539px;top:599px;" width="13" height="13" viewBox="0 0 13 13"><path d="M1 12 Q1 8 4 8 L11 1 L12 2 L6 10 Q5 12 1 12Z" fill="#8f8f8f"/></svg>
<svg style="left:1560px;top:599px;" width="13" height="13" viewBox="0 0 13 13"><path d="M6.5 1 V12 M1 6.5 H12" stroke="#8f8f8f" stroke-width="1.3"/><path d="M6.5 0 L4.5 2.5 H8.5Z M6.5 13 L4.5 10.5 H8.5Z M0 6.5 L2.5 4.5 V8.5Z M13 6.5 L10.5 4.5 V8.5Z" fill="#8f8f8f"/></svg>
<svg style="left:1582px;top:599px;" width="13" height="13" viewBox="0 0 13 13"><path d="M3 0 V10 H13 M0 3 H10 V13" stroke="#8f8f8f" stroke-width="1.3" fill="none"/></svg>
<svg style="left:1605px;top:599px;" width="11" height="13" viewBox="0 0 11 13"><path d="M3 6 V3.5 A2.5 2.5 0 0 1 8 3.5 V6" stroke="#8f8f8f" stroke-width="1.5" fill="none"/><rect x="1" y="6" width="9" height="7" fill="#8f8f8f"/><rect x="4.8" y="8.5" width="1.5" height="2" fill="#535353"/></svg>
<div class="t" style="left:1627px;top:600px;font-size:12px;line-height:12px;color:#8f8f8f;">填充:</div>
<div style="left:1658px;top:596px;width:56px;height:20px;background:#4b4b4b;border:1px solid #5c5c5c;border-radius:3px;box-sizing:border-box"></div>
<div style="left:1696px;top:597px;width:1px;height:18px;background:#5c5c5c"></div>
<div class="t" style="left:1661px;top:600px;font-size:11px;line-height:11px;color:#7e7e7e;">100%</div>
<svg style="left:1701px;top:605px;" width="8" height="5" viewBox="0 0 8 5"><path d="M1 1 L4 4 L7 1" stroke="#6c6c6c" fill="none"/></svg>
<div style="left:1473px;top:620px;width:250px;height:1px;background:#454545"></div>
<svg style="left:1523px;top:621px;" width="32" height="9" viewBox="0 0 32 9"><rect x="0.5" y="0" width="31" height="8.5" fill="#111"/><rect x="1.5" y="0" width="29" height="7" fill="#b4b4b4"/><path d="M3 2.5 H29" stroke="#222"/><path d="M16 3 L13.5 6 H18.5Z" fill="#222"/></svg>
<div style="left:1570px;top:621px;width:24px;height:9px;background:#fff;border:1px solid #111;border-top:none;box-sizing:border-box"></div>
<div style="left:1503px;top:621px;width:1px;height:285px;background:#444444"></div>
<div style="left:1473px;top:633px;width:236px;height:1px;background:#444444"></div>
<svg style="left:1482px;top:649px;" width="14" height="9" viewBox="0 0 14 9"><path d="M0 4.5 Q6.7 -2.5 13.4 4.5 Q6.7 11.5 0 4.5Z" fill="#dedede"/><circle cx="6.7" cy="4.5" r="2.7" fill="#3c3c3c"/><circle cx="7.6" cy="3.6" r="0.8" fill="#eee"/></svg>
<svg style="left:1507px;top:637px;" width="24" height="32" viewBox="0 0 24 32"><defs><pattern id="ck" width="8" height="8" patternUnits="userSpaceOnUse"><rect width="8" height="8" fill="#fff"/><rect width="4" height="4" fill="#cfcfcf"/><rect x="4" y="4" width="4" height="4" fill="#cfcfcf"/></pattern></defs><path d="M0.5 0.5 H23.5 V19.5 H11.5 V31.5 H0.5Z" fill="url(#ck)" stroke="#111"/><path d="M13.5 22.5 H21.5 V30.5 H13.5Z" fill="none" stroke="#d8d8d8" stroke-width="1.2"/><rect x="12" y="21" width="3" height="3" fill="#535353" stroke="#d8d8d8"/><rect x="20" y="21" width="3" height="3" fill="#535353" stroke="#d8d8d8"/><rect x="12" y="29" width="3" height="3" fill="#535353" stroke="#d8d8d8"/><rect x="20" y="29" width="3" height="3" fill="#535353" stroke="#d8d8d8"/></svg>
<div class="t" style="left:1540px;top:648px;font-size:12px;line-height:12px;color:#e6e6e6;text-decoration:underline">矩形 1</div>
<div style="left:1473px;top:672px;width:236px;height:1px;background:#444444"></div>
<svg style="left:1482px;top:687px;" width="14" height="9" viewBox="0 0 14 9"><path d="M0 4.5 Q6.7 -2.5 13.4 4.5 Q6.7 11.5 0 4.5Z" fill="#dedede"/><circle cx="6.7" cy="4.5" r="2.7" fill="#3c3c3c"/><circle cx="7.6" cy="3.6" r="0.8" fill="#eee"/></svg>
<svg style="left:1513px;top:688px;" width="8" height="9" viewBox="0 0 8 9"><path d="M6.5 1.5 H3 V5.5" stroke="#d8d8d8" stroke-width="1.2" fill="none"/><path d="M0 5 H6 L3 8.5Z" fill="#d8d8d8"/></svg>
<svg style="left:1523px;top:676px;" width="32" height="32" viewBox="0 0 32 32"><defs><linearGradient id="g1" x1="0" y1="0.2" x2="1" y2="0.8"><stop offset="0" stop-color="#e29aa0"/><stop offset="0.3" stop-color="#7d2f38"/><stop offset="0.45" stop-color="#d88e94"/><stop offset="0.6" stop-color="#e8b2b6"/><stop offset="1" stop-color="#e48a92"/></linearGradient></defs><rect x="0.5" y="0.5" width="31" height="31" fill="#111"/><rect x="1.5" y="1.5" width="29" height="21" fill="url(#g1)"/><rect x="1.5" y="23.5" width="29" height="7" fill="#b4b4b4"/><path d="M3 25.5 H29" stroke="#222"/><path d="M16 26 L13.5 29 H18.5Z" fill="#222"/></svg>
<svg style="left:1558px;top:685px;" width="9" height="15" viewBox="0 0 9 15"><rect x="0.9" y="0.9" width="7.2" height="7" rx="3.4" fill="none" stroke="#cfcfcf" stroke-width="1.6"/><rect x="0.9" y="7.1" width="7.2" height="7" rx="3.4" fill="none" stroke="#cfcfcf" stroke-width="1.6"/><rect x="3.6" y="4.5" width="1.8" height="6" fill="#cfcfcf"/></svg>
<div style="left:1570px;top:676px;width:24px;height:32px;background:#fff;border:1px solid #111;box-sizing:border-box;border-radius:1px"></div>
<div class="t" style="left:1603px;top:687px;font-size:12px;line-height:12px;color:#e6e6e6;">渐变填充 1</div>
<div style="left:1473px;top:711px;width:236px;height:1px;background:#444444"></div>
<svg style="left:1482px;top:726px;" width="14" height="9" viewBox="0 0 14 9"><path d="M0 4.5 Q6.7 -2.5 13.4 4.5 Q6.7 11.5 0 4.5Z" fill="#dedede"/><circle cx="6.7" cy="4.5" r="2.7" fill="#3c3c3c"/><circle cx="7.6" cy="3.6" r="0.8" fill="#eee"/></svg>
<svg style="left:1507px;top:715px;" width="24" height="32" viewBox="0 0 24 32"><defs><pattern id="ck" width="8" height="8" patternUnits="userSpaceOnUse"><rect width="8" height="8" fill="#fff"/><rect width="4" height="4" fill="#cfcfcf"/><rect x="4" y="4" width="4" height="4" fill="#cfcfcf"/></pattern></defs><path d="M0.5 0.5 H23.5 V19.5 H11.5 V31.5 H0.5Z" fill="url(#ck)" stroke="#111"/><path d="M13.5 22.5 H21.5 V30.5 H13.5Z" fill="none" stroke="#d8d8d8" stroke-width="1.2"/><rect x="12" y="21" width="3" height="3" fill="#535353" stroke="#d8d8d8"/><rect x="20" y="21" width="3" height="3" fill="#535353" stroke="#d8d8d8"/><rect x="12" y="29" width="3" height="3" fill="#535353" stroke="#d8d8d8"/><rect x="20" y="29" width="3" height="3" fill="#535353" stroke="#d8d8d8"/></svg>
<div class="t" style="left:1540px;top:726px;font-size:12px;line-height:12px;color:#e6e6e6;text-decoration:underline">椭圆 1</div>
<div style="left:1473px;top:750px;width:236px;height:1px;background:#444444"></div>
<svg style="left:1482px;top:765px;" width="14" height="9" viewBox="0 0 14 9"><path d="M0 4.5 Q6.7 -2.5 13.4 4.5 Q6.7 11.5 0 4.5Z" fill="#dedede"/><circle cx="6.7" cy="4.5" r="2.7" fill="#3c3c3c"/><circle cx="7.6" cy="3.6" r="0.8" fill="#eee"/></svg>
<svg style="left:1513px;top:766px;" width="8" height="9" viewBox="0 0 8 9"><path d="M6.5 1.5 H3 V5.5" stroke="#d8d8d8" stroke-width="1.2" fill="none"/><path d="M0 5 H6 L3 8.5Z" fill="#d8d8d8"/></svg>
<svg style="left:1523px;top:754px;" width="32" height="32" viewBox="0 0 32 32"><defs><linearGradient id="g2" x1="0" y1="0.2" x2="1" y2="0.8"><stop offset="0" stop-color="#c98a8c"/><stop offset="0.42" stop-color="#c98a8c"/><stop offset="0.5" stop-color="#7a2e37"/><stop offset="0.62" stop-color="#c98a8c"/><stop offset="1" stop-color="#d49498"/></linearGradient></defs><rect x="0.5" y="0.5" width="31" height="31" fill="#111"/><rect x="1.5" y="1.5" width="29" height="21" fill="url(#g2)"/><rect x="1.5" y="23.5" width="29" height="7" fill="#b4b4b4"/><path d="M3 25.5 H29" stroke="#222"/><path d="M16 26 L13.5 29 H18.5Z" fill="#222"/></svg>
<svg style="left:1558px;top:763px;" width="9" height="15" viewBox="0 0 9 15"><rect x="0.9" y="0.9" width="7.2" height="7" rx="3.4" fill="none" stroke="#cfcfcf" stroke-width="1.6"/><rect x="0.9" y="7.1" width="7.2" height="7" rx="3.4" fill="none" stroke="#cfcfcf" stroke-width="1.6"/><rect x="3.6" y="4.5" width="1.8" height="6" fill="#cfcfcf"/></svg>
<div style="left:1570px;top:754px;width:24px;height:32px;background:#fff;border:1px solid #111;box-sizing:border-box;border-radius:1px"></div>
<div class="t" style="left:1603px;top:765px;font-size:12px;line-height:12px;color:#e6e6e6;">渐变填充 1 拷贝</div>
<div style="left:1473px;top:789px;width:236px;height:1px;background:#444444"></div>
<div style="left:1504px;top:790px;width:193px;height:39px;background:#6a6a6a"></div>
<div style="left:1697px;top:790px;width:11px;height:39px;background:#5a5a5a"></div>
<svg style="left:1482px;top:804px;" width="14" height="9" viewBox="0 0 14 9"><path d="M0 4.5 Q6.7 -2.5 13.4 4.5 Q6.7 11.5 0 4.5Z" fill="#dedede"/><circle cx="6.7" cy="4.5" r="2.7" fill="#3c3c3c"/><circle cx="7.6" cy="3.6" r="0.8" fill="#eee"/></svg>
<svg style="left:1507px;top:793px;" width="24" height="32" viewBox="0 0 24 32"><defs><pattern id="ck" width="8" height="8" patternUnits="userSpaceOnUse"><rect width="8" height="8" fill="#fff"/><rect width="4" height="4" fill="#cfcfcf"/><rect x="4" y="4" width="4" height="4" fill="#cfcfcf"/></pattern></defs><path d="M0.5 0.5 H23.5 V19.5 H11.5 V31.5 H0.5Z" fill="url(#ck)" stroke="#111"/><path d="M13.5 22.5 H21.5 V30.5 H13.5Z" fill="none" stroke="#d8d8d8" stroke-width="1.2"/><rect x="12" y="21" width="3" height="3" fill="#535353" stroke="#d8d8d8"/><rect x="20" y="21" width="3" height="3" fill="#535353" stroke="#d8d8d8"/><rect x="12" y="29" width="3" height="3" fill="#535353" stroke="#d8d8d8"/><rect x="20" y="29" width="3" height="3" fill="#535353" stroke="#d8d8d8"/></svg>
<svg style="left:1504px;top:792px;" width="30" height="36" viewBox="0 0 30 36"><path d="M1 7 V1 H5 M25 1 H29 V7 M1 29 V35 H5 M25 35 H29 V29" stroke="#eee" fill="none" stroke-width="1.2"/></svg>
<div class="t" style="left:1540px;top:804px;font-size:12px;line-height:12px;color:#f0f0f0;text-decoration:underline">椭圆 1 拷贝</div>
<div class="t" style="left:1681px;top:802px;font-size:13px;line-height:13px;color:#c8c8c8;font-style:italic">fx</div>
<svg style="left:1698px;top:805px;" width="9" height="6" viewBox="0 0 9 6"><path d="M1 5 L4.5 1.5 L8 5" stroke="#c8c8c8" fill="none" stroke-width="1.1"/></svg>
<div style="left:1504px;top:829px;width:204px;height:1px;background:#464646"></div>
<svg style="left:1523px;top:833px;" width="14" height="9" viewBox="0 0 14 9"><path d="M0 4.5 Q6.7 -2.5 13.4 4.5 Q6.7 11.5 0 4.5Z" fill="#dedede"/><circle cx="6.7" cy="4.5" r="2.7" fill="#3c3c3c"/><circle cx="7.6" cy="3.6" r="0.8" fill="#eee"/></svg>
<div class="t" style="left:1541px;top:832px;font-size:12px;line-height:12px;color:#e6e6e6;">效果</div>
<svg style="left:1540px;top:852px;" width="14" height="9" viewBox="0 0 14 9"><path d="M0 4.5 Q6.7 -2.5 13.4 4.5 Q6.7 11.5 0 4.5Z" fill="#dedede"/><circle cx="6.7" cy="4.5" r="2.7" fill="#3c3c3c"/><circle cx="7.6" cy="3.6" r="0.8" fill="#eee"/></svg>
<div class="t" style="left:1558px;top:851px;font-size:12px;line-height:12px;color:#e6e6e6;">投影</div>
<div style="left:1473px;top:867px;width:236px;height:1px;background:#444444"></div>
<svg style="left:1482px;top:881px;" width="14" height="9" viewBox="0 0 14 9"><path d="M0 4.5 Q6.7 -2.5 13.4 4.5 Q6.7 11.5 0 4.5Z" fill="#dedede"/><circle cx="6.7" cy="4.5" r="2.7" fill="#3c3c3c"/><circle cx="7.6" cy="3.6" r="0.8" fill="#eee"/></svg>
<div style="left:1507px;top:870px;width:24px;height:32px;background:#fff;border:1px solid #111;box-sizing:border-box"></div>
<div class="t" style="left:1540px;top:881px;font-size:12px;line-height:12px;color:#e6e6e6;">背景</div>
<svg style="left:1680px;top:879px;" width="11" height="13" viewBox="0 0 11 13"><path d="M3 6 V3.5 A2.5 2.5 0 0 1 8 3.5 V6" stroke="#d0d0d0" stroke-width="1.3" fill="none"/><rect x="1" y="6" width="9" height="6.5" fill="none" stroke="#d0d0d0" stroke-width="1.2"/><rect x="5" y="8.5" width="1.3" height="2" fill="#d0d0d0"/></svg>
<div style="left:1473px;top:906px;width:236px;height:1px;background:#444444"></div>
<div style="left:1709px;top:621px;width:14px;height:286px;background:#4d4d4d"></div>
<svg style="left:1711px;top:626px;" width="10" height="6" viewBox="0 0 10 6"><path d="M1 5 L5 1 L9 5" stroke="#8a8a8a" fill="none"/></svg>
<div style="left:1710px;top:659px;width:12px;height:232px;background:#606060"></div>
<svg style="left:1711px;top:893px;" width="10" height="6" viewBox="0 0 10 6"><path d="M1 1 L5 5 L9 1" stroke="#8a8a8a" fill="none"/></svg>
<div style="left:1476px;top:790px;width:238px;height:77px;border:3px solid #f00;border-top-width:2px;box-sizing:border-box"></div>
<div style="left:1473px;top:907px;width:250px;height:24px;background:#535353"></div>
<svg style="left:1519px;top:913px;" width="16" height="10" viewBox="0 0 16 10"><rect x="1" y="1.5" width="7" height="7" rx="3.5" fill="none" stroke="#9a9a9a" stroke-width="1.4"/><rect x="8" y="1.5" width="7" height="7" rx="3.5" fill="none" stroke="#9a9a9a" stroke-width="1.4"/><path d="M5 5 H11" stroke="#9a9a9a" stroke-width="1.4"/></svg>
<div class="t" style="left:1547px;top:911px;font-size:13px;line-height:13px;color:#9a9a9a;font-style:italic">fx</div>
<svg style="left:1573px;top:912px;" width="14" height="12" viewBox="0 0 14 12"><rect x="0" y="0" width="14" height="12" fill="#9a9a9a"/><circle cx="7" cy="6" r="3.5" fill="#535353"/></svg>
<svg style="left:1601px;top:911px;" width="13" height="13" viewBox="0 0 13 13"><circle cx="6.5" cy="6.5" r="5.5" fill="none" stroke="#9a9a9a" stroke-width="1.3"/><path d="M10.5 2.5 A5.5 5.5 0 0 1 2.5 10.5Z" fill="#9a9a9a"/></svg>
<svg style="left:1628px;top:912px;" width="15" height="12" viewBox="0 0 15 12"><path d="M0 1 H5 L6.5 3 H15 V12 H0Z" fill="#9a9a9a"/></svg>
<svg style="left:1655px;top:911px;" width="13" height="14" viewBox="0 0 13 14"><path d="M1 1 H12 V9 L8 13 H1Z" fill="none" stroke="#9a9a9a" stroke-width="1.3"/><path d="M12 9 H8 V13" fill="none" stroke="#9a9a9a" stroke-width="1.2"/></svg>
<svg style="left:1682px;top:911px;" width="12" height="14" viewBox="0 0 12 14"><path d="M0.5 2.5 H11.5 M4 2.5 V1 H8 V2.5" stroke="#9a9a9a" stroke-width="1.3" fill="none"/><path d="M2 4 H10 L9.5 13 H2.5Z" stroke="#9a9a9a" stroke-width="1.3" fill="none"/><path d="M5 5.5 V11.5 M7 5.5 V11.5" stroke="#9a9a9a"/></svg>
<div style="left:925px;top:18px;width:789px;height:521px;background:#535353;border:1px solid #1f7ad4;box-sizing:border-box;box-shadow:0 2px 18px rgba(0,0,0,0.26)"></div>
<div style="left:926px;top:19px;width:787px;height:30px;background:#ffffff"></div>
<div class="t" style="left:934px;top:28px;font-size:12px;line-height:12px;color:#000;">图层样式</div>
<svg style="left:1693px;top:28px;" width="11" height="11" viewBox="0 0 11 11"><path d="M0.5 0.5 L10.5 10.5 M10.5 0.5 L0.5 10.5" stroke="#111" stroke-width="1.2"/></svg>
<div style="left:936px;top:61px;width:230px;height:467px;border:1px solid #404040;box-sizing:border-box"></div>
<div style="left:937px;top:62px;width:228px;height:465px;border:1px solid #4a4a4a;box-sizing:border-box"></div>
<div style="left:1148px;top:63px;width:16px;height:438px;background:#4b4b4b"></div>
<div style="left:938px;top:501px;width:226px;height:1px;background:#424242"></div>
<div style="left:938px;top:89px;width:210px;height:1px;background:#424242"></div>
<div class="t" style="left:945px;top:71px;font-size:12px;line-height:12px;color:#f2f2f2;">样式</div>
<div style="left:938px;top:115px;width:210px;height:1px;background:#424242"></div>
<div class="t" style="left:945px;top:97px;font-size:12px;line-height:12px;color:#f2f2f2;">混合选项</div>
<div style="left:938px;top:141px;width:210px;height:1px;background:#424242"></div>
<div style="left:943px;top:120px;width:13px;height:13px;background:#474747;border:1px solid #777;border-radius:2px;box-sizing:border-box"></div>
<div class="t" style="left:963px;top:122px;font-size:12px;line-height:12px;color:#f2f2f2;">斜面和浮雕</div>
<div style="left:938px;top:167px;width:210px;height:1px;background:#424242"></div>
<div style="left:953px;top:146px;width:13px;height:13px;background:#474747;border:1px solid #777;border-radius:2px;box-sizing:border-box"></div>
<div class="t" style="left:973px;top:148px;font-size:12px;line-height:12px;color:#f2f2f2;">等高线</div>
<div style="left:938px;top:193px;width:210px;height:1px;background:#424242"></div>
<div style="left:953px;top:172px;width:13px;height:13px;background:#474747;border:1px solid #777;border-radius:2px;box-sizing:border-box"></div>
<div class="t" style="left:973px;top:174px;font-size:12px;line-height:12px;color:#f2f2f2;">纹理</div>
<div style="left:938px;top:219px;width:210px;height:1px;background:#424242"></div>
<div style="left:943px;top:198px;width:13px;height:13px;background:#474747;border:1px solid #777;border-radius:2px;box-sizing:border-box"></div>
<div class="t" style="left:963px;top:200px;font-size:12px;line-height:12px;color:#f2f2f2;">描边</div>
<div style="left:1130px;top:199px;width:14px;height:14px;border:1px solid #dedede;box-sizing:border-box"></div>
<svg style="left:1130px;top:199px;" width="14" height="14" viewBox="0 0 14 14"><path d="M7 3 V11 M3 7 H11" stroke="#e6e6e6" stroke-width="2"/></svg>
<div style="left:938px;top:245px;width:210px;height:1px;background:#424242"></div>
<div style="left:943px;top:224px;width:13px;height:13px;background:#474747;border:1px solid #777;border-radius:2px;box-sizing:border-box"></div>
<div class="t" style="left:963px;top:226px;font-size:12px;line-height:12px;color:#f2f2f2;">内阴影</div>
<div style="left:1130px;top:225px;width:14px;height:14px;border:1px solid #dedede;box-sizing:border-box"></div>
<svg style="left:1130px;top:225px;" width="14" height="14" viewBox="0 0 14 14"><path d="M7 3 V11 M3 7 H11" stroke="#e6e6e6" stroke-width="2"/></svg>
<div style="left:938px;top:271px;width:210px;height:1px;background:#424242"></div>
<div style="left:943px;top:250px;width:13px;height:13px;background:#474747;border:1px solid #777;border-radius:2px;box-sizing:border-box"></div>
<div class="t" style="left:963px;top:252px;font-size:12px;line-height:12px;color:#f2f2f2;">内发光</div>
<div style="left:938px;top:297px;width:210px;height:1px;background:#424242"></div>
<div style="left:943px;top:276px;width:13px;height:13px;background:#474747;border:1px solid #777;border-radius:2px;box-sizing:border-box"></div>
<div class="t" style="left:963px;top:278px;font-size:12px;line-height:12px;color:#f2f2f2;">光泽</div>
<div style="left:938px;top:323px;width:210px;height:1px;background:#424242"></div>
<div style="left:943px;top:302px;width:13px;height:13px;background:#474747;border:1px solid #777;border-radius:2px;box-sizing:border-box"></div>
<div class="t" style="left:963px;top:304px;font-size:12px;line-height:12px;color:#f2f2f2;">颜色叠加</div>
<div style="left:1130px;top:303px;width:14px;height:14px;border:1px solid #dedede;box-sizing:border-box"></div>
<svg style="left:1130px;top:303px;" width="14" height="14" viewBox="0 0 14 14"><path d="M7 3 V11 M3 7 H11" stroke="#e6e6e6" stroke-width="2"/></svg>
<div style="left:938px;top:349px;width:210px;height:1px;background:#424242"></div>
<div style="left:943px;top:328px;width:13px;height:13px;background:#474747;border:1px solid #777;border-radius:2px;box-sizing:border-box"></div>
<div class="t" style="left:963px;top:330px;font-size:12px;line-height:12px;color:#f2f2f2;">渐变叠加</div>
<div style="left:1130px;top:329px;width:14px;height:14px;border:1px solid #dedede;box-sizing:border-box"></div>
<svg style="left:1130px;top:329px;" width="14" height="14" viewBox="0 0 14 14"><path d="M7 3 V11 M3 7 H11" stroke="#e6e6e6" stroke-width="2"/></svg>
<div style="left:938px;top:375px;width:210px;height:1px;background:#424242"></div>
<div style="left:943px;top:354px;width:13px;height:13px;background:#474747;border:1px solid #777;border-radius:2px;box-sizing:border-box"></div>
<div class="t" style="left:963px;top:356px;font-size:12px;line-height:12px;color:#f2f2f2;">图案叠加</div>
<div style="left:938px;top:401px;width:210px;height:1px;background:#424242"></div>
<div style="left:943px;top:380px;width:13px;height:13px;background:#474747;border:1px solid #777;border-radius:2px;box-sizing:border-box"></div>
<div class="t" style="left:963px;top:382px;font-size:12px;line-height:12px;color:#f2f2f2;">外发光</div>
<div style="left:938px;top:402px;width:210px;height:25px;background:#6b6b6b"></div>
<div style="left:938px;top:427px;width:210px;height:1px;background:#424242"></div>
<div style="left:943px;top:406px;width:13px;height:13px;background:#dcdcdc;border-radius:2px"></div>
<svg style="left:943px;top:406px;" width="13" height="13" viewBox="0 0 13 13"><path d="M3 6.5 L5.5 9 L10 3.8" stroke="#333" stroke-width="2" fill="none"/></svg>
<div class="t" style="left:963px;top:408px;font-size:12px;line-height:12px;color:#f2f2f2;">投影</div>
<div style="left:1130px;top:407px;width:14px;height:14px;border:1px solid #dedede;box-sizing:border-box"></div>
<svg style="left:1130px;top:407px;" width="14" height="14" viewBox="0 0 14 14"><path d="M7 3 V11 M3 7 H11" stroke="#e6e6e6" stroke-width="2"/></svg>
<div class="t" style="left:945px;top:507px;font-size:13px;line-height:13px;color:#bdbdbd;font-style:italic">fx</div>
<svg style="left:954px;top:519px;" width="5" height="3" viewBox="0 0 5 3"><path d="M0 0 H5 L2.5 3Z" fill="#dcdcdc"/></svg>
<svg style="left:973px;top:507px;" width="12" height="13" viewBox="0 0 12 13"><path d="M6 0 L12 6 H8.5 V12 H3.5 V6 H0Z" fill="#878787"/></svg>
<svg style="left:999px;top:507px;" width="12" height="13" viewBox="0 0 12 13"><path d="M6 12 L12 6 H8.5 V0 H3.5 V6 H0Z" fill="#878787"/></svg>
<svg style="left:1142px;top:507px;" width="12" height="13" viewBox="0 0 12 13"><path d="M1 2.5 H11 M4.5 2.5 V1 H7.5 V2.5" stroke="#c8c8c8" stroke-width="1.2" fill="none"/><path d="M2.5 4 H9.5 L9 12 H3Z" stroke="#c8c8c8" stroke-width="1.2" fill="none"/><path d="M5 5.5 V10.5 M7 5.5 V10.5" stroke="#c8c8c8"/></svg>
<div style="left:934px;top:394px;width:225px;height:37px;border:3px solid #f00;border-top-width:2px;box-sizing:border-box"></div>
<div style="left:1182px;top:66px;width:376px;height:461px;border:1px solid #444444;box-sizing:border-box"></div>
<div style="left:1200px;top:65px;width:32px;height:3px;background:#535353"></div>
<div class="t" style="left:1204px;top:61px;font-size:12px;line-height:12px;color:#f2f2f2;">投影</div>
<div style="left:1193px;top:85px;width:355px;height:184px;border:1px solid #444444;box-sizing:border-box"></div>
<div style="left:1210px;top:84px;width:32px;height:3px;background:#535353"></div>
<div class="t" style="left:1214px;top:80px;font-size:12px;line-height:12px;color:#f2f2f2;">结构</div>
<div style="left:1193px;top:281px;width:355px;height:84px;border:1px solid #444444;box-sizing:border-box"></div>
<div style="left:1209px;top:280px;width:32px;height:3px;background:#535353"></div>
<div class="t" style="left:1213px;top:276px;font-size:12px;line-height:12px;color:#f2f2f2;">品质</div>
<div class="t" style="left:1080px;top:109px;width:200px;text-align:right;font-size:12px;line-height:12px;color:#f2f2f2">混合模式:</div>
<div style="left:1287px;top:104px;width:132px;height:21px;background:#474747;border:1px solid #5f5f5f;border-radius:3px;box-sizing:border-box"></div>
<div class="t" style="left:1296px;top:109px;font-size:12px;line-height:12px;color:#f0f0f0;">正片叠底</div>
<svg style="left:1406px;top:112px;" width="10" height="6" viewBox="0 0 10 6"><path d="M1 1 L5 5 L9 1" stroke="#d0d0d0" fill="none" stroke-width="1.2"/></svg>
<div style="left:1421px;top:101px;width:36px;height:27px;background:#000;border:1px solid #3a3a3a;box-sizing:border-box"></div>
<div class="t" style="left:1080px;top:136px;width:200px;text-align:right;font-size:12px;line-height:12px;color:#f2f2f2">不透明度(O):</div>
<div style="left:1292px;top:136px;width:95px;height:3px;background:#767676"></div>
<svg style="left:1342.5px;top:137px;" width="13" height="12" viewBox="0 0 13 12"><path d="M6.5 1 L12 7.2 Q12.2 10.6 10 10.7 H3 Q0.8 10.6 1 7.2Z" fill="#f0f0f0" stroke="#161616" stroke-width="1.1"/></svg>
<div style="left:1397px;top:132px;width:42px;height:19px;background:#454545;border:1px solid #6a6a6a;box-sizing:border-box"></div>
<div class="t" style="left:1400px;top:136px;font-size:11px;line-height:11px;color:#ffffff;">60</div>
<div class="t" style="left:1442px;top:136px;font-size:12px;line-height:12px;color:#f2f2f2;">%</div>
<div class="t" style="left:1080px;top:167px;width:200px;text-align:right;font-size:12px;line-height:12px;color:#f2f2f2">角度(A):</div>
<svg style="left:1285px;top:154px;" width="38" height="38" viewBox="0 0 38 38"><circle cx="19" cy="19" r="17.5" fill="none" stroke="#a0a0a0" stroke-width="1.2"/><path d="M19 19 L6.5 9.5" stroke="#bdbdbd" stroke-width="1.1"/><circle cx="19" cy="19" r="2" fill="#b0b0b0"/></svg>
<div style="left:1326px;top:163px;width:42px;height:19px;background:#454545;border:1px solid #6a6a6a;box-sizing:border-box"></div>
<div class="t" style="left:1329px;top:167px;font-size:11px;line-height:11px;color:#ffffff;">140</div>
<div class="t" style="left:1371px;top:167px;font-size:12px;line-height:12px;color:#f2f2f2;">度</div>
<div style="left:1396px;top:165px;width:13px;height:13px;background:#474747;border:1px solid #777;border-radius:2px;box-sizing:border-box"></div>
<div class="t" style="left:1416px;top:167px;font-size:12px;line-height:12px;color:#f2f2f2;">使用全局光(G)</div>
<div class="t" style="left:1080px;top:199px;width:200px;text-align:right;font-size:12px;line-height:12px;color:#f2f2f2">距离(D):</div>
<div style="left:1292px;top:199px;width:95px;height:3px;background:#767676"></div>
<svg style="left:1358.5px;top:200px;" width="13" height="12" viewBox="0 0 13 12"><path d="M6.5 1 L12 7.2 Q12.2 10.6 10 10.7 H3 Q0.8 10.6 1 7.2Z" fill="#f0f0f0" stroke="#161616" stroke-width="1.1"/></svg>
<div style="left:1397px;top:196px;width:42px;height:18px;background:#454545;border:1px solid #6a6a6a;box-sizing:border-box"></div>
<div class="t" style="left:1400px;top:200px;font-size:11px;line-height:11px;color:#ffffff;">100</div>
<div class="t" style="left:1443px;top:199px;font-size:12px;line-height:12px;color:#f2f2f2;">像素</div>
<div class="t" style="left:1080px;top:222px;width:200px;text-align:right;font-size:12px;line-height:12px;color:#f2f2f2">扩展(R):</div>
<div style="left:1292px;top:222px;width:95px;height:3px;background:#767676"></div>
<svg style="left:1285.5px;top:223px;" width="13" height="12" viewBox="0 0 13 12"><path d="M6.5 1 L12 7.2 Q12.2 10.6 10 10.7 H3 Q0.8 10.6 1 7.2Z" fill="#f0f0f0" stroke="#161616" stroke-width="1.1"/></svg>
<div style="left:1397px;top:219px;width:42px;height:18px;background:#454545;border:1px solid #6a6a6a;box-sizing:border-box"></div>
<div class="t" style="left:1400px;top:223px;font-size:11px;line-height:11px;color:#ffffff;">1</div>
<div class="t" style="left:1442px;top:222px;font-size:12px;line-height:12px;color:#f2f2f2;">%</div>
<div class="t" style="left:1080px;top:245px;width:200px;text-align:right;font-size:12px;line-height:12px;color:#f2f2f2">大小(S):</div>
<div style="left:1292px;top:245px;width:95px;height:3px;background:#767676"></div>
<svg style="left:1352.5px;top:246px;" width="13" height="12" viewBox="0 0 13 12"><path d="M6.5 1 L12 7.2 Q12.2 10.6 10 10.7 H3 Q0.8 10.6 1 7.2Z" fill="#f0f0f0" stroke="#161616" stroke-width="1.1"/></svg>
<div style="left:1397px;top:242px;width:42px;height:18px;background:#454545;border:1px solid #6a6a6a;box-sizing:border-box"></div>
<div class="t" style="left:1400px;top:246px;font-size:11px;line-height:11px;color:#ffffff;">169</div>
<div class="t" style="left:1443px;top:245px;font-size:12px;line-height:12px;color:#f2f2f2;">像素</div>
<div class="t" style="left:1080px;top:309px;width:200px;text-align:right;font-size:12px;line-height:12px;color:#f2f2f2">等高线:</div>
<div style="left:1287px;top:297px;width:47px;height:36px;background:#474747;border:1px solid #5f5f5f;box-sizing:border-box"></div>
<svg style="left:1288px;top:298px;" width="34" height="34" viewBox="0 0 34 34"><path d="M0 0 H34 V0 L0 34Z" fill="#fff"/><path d="M34 0 V34 H0Z" fill="#3d3d3d"/></svg>
<div style="left:1321px;top:297px;width:1px;height:36px;background:#5f5f5f"></div>
<svg style="left:1324px;top:312px;" width="8" height="5" viewBox="0 0 8 5"><path d="M1 1 L4 4 L7 1" stroke="#c8c8c8" fill="none" stroke-width="1"/></svg>
<div style="left:1346px;top:308px;width:13px;height:12px;background:#474747;border:1px solid #777;border-radius:2px;box-sizing:border-box"></div>
<div class="t" style="left:1366px;top:309px;font-size:12px;line-height:12px;color:#f2f2f2;">消除锯齿(L)</div>
<div class="t" style="left:1080px;top:341px;width:200px;text-align:right;font-size:12px;line-height:12px;color:#f2f2f2">杂色(N):</div>
<div style="left:1291px;top:341px;width:96px;height:3px;background:#767676"></div>
<svg style="left:1285.5px;top:342px;" width="13" height="12" viewBox="0 0 13 12"><path d="M6.5 1 L12 7.2 Q12.2 10.6 10 10.7 H3 Q0.8 10.6 1 7.2Z" fill="#f0f0f0" stroke="#161616" stroke-width="1.1"/></svg>
<div style="left:1397px;top:337px;width:42px;height:19px;background:#454545;border:1px solid #6a6a6a;box-sizing:border-box"></div>
<div class="t" style="left:1400px;top:341px;font-size:11px;line-height:11px;color:#ffffff;">0</div>
<div class="t" style="left:1443px;top:341px;font-size:12px;line-height:12px;color:#f2f2f2;">%</div>
<div style="left:1290px;top:370px;width:13px;height:13px;background:#dcdcdc;border-radius:2px"></div>
<svg style="left:1290px;top:370px;" width="13" height="13" viewBox="0 0 13 13"><path d="M3 6.5 L5.5 9 L10 3.8" stroke="#333" stroke-width="2" fill="none"/></svg>
<div class="t" style="left:1309px;top:372px;font-size:12px;line-height:12px;color:#f2f2f2;">图层挖空投影(U)</div>
<div style="left:1265px;top:390px;width:100px;height:20px;background:#454545;border:1px solid #626262;border-radius:2px;box-sizing:border-box"></div>
<div class="t" style="left:1265px;top:394px;width:100px;text-align:center;font-size:12px;line-height:12px;color:#f0f0f0">设置为默认值</div>
<div style="left:1374px;top:390px;width:100px;height:20px;background:#454545;border:1px solid #626262;border-radius:2px;box-sizing:border-box"></div>
<div class="t" style="left:1374px;top:394px;width:100px;text-align:center;font-size:12px;line-height:12px;color:#f0f0f0">复位为默认值</div>
<div style="left:1192px;top:57px;width:335px;height:378px;border:2px solid #f00;box-sizing:border-box"></div>
<div style="left:1573px;top:63px;width:130px;height:27px;border:2px solid #cfcfcf;border-radius:14px;box-sizing:border-box"></div>
<div class="t" style="left:1573px;top:70px;width:130px;text-align:center;font-size:12px;line-height:12px;color:#f0f0f0">确定</div>
<div style="left:1573px;top:98px;width:130px;height:27px;border:1px solid #7b7b7b;border-radius:14px;box-sizing:border-box"></div>
<div class="t" style="left:1573px;top:105px;width:130px;text-align:center;font-size:12px;line-height:12px;color:#f0f0f0">取消</div>
<div style="left:1573px;top:133px;width:130px;height:27px;border:1px solid #7b7b7b;border-radius:14px;box-sizing:border-box"></div>
<div class="t" style="left:1573px;top:140px;width:130px;text-align:center;font-size:12px;line-height:12px;color:#f0f0f0;letter-spacing:0.5px">新建样式(W)...</div>
<div style="left:1600px;top:170px;width:13px;height:13px;background:#dcdcdc;border-radius:2px"></div>
<svg style="left:1600px;top:170px;" width="13" height="13" viewBox="0 0 13 13"><path d="M3 6.5 L5.5 9 L10 3.8" stroke="#333" stroke-width="2" fill="none"/></svg>
<div class="t" style="left:1622px;top:172px;font-size:12px;line-height:12px;color:#f2f2f2;">预览(V)</div>
<div style="left:1573px;top:195px;width:130px;height:129px;overflow:hidden;background:#2b2b2b"><div style="position:absolute;left:71px;top:65px;width:64px;height:64px;background:#000;opacity:0.62;filter:blur(12px)"></div><div style="position:absolute;left:33px;top:33px;width:64px;height:64px;background:#5a5a5a"></div></div>
</body></html>
